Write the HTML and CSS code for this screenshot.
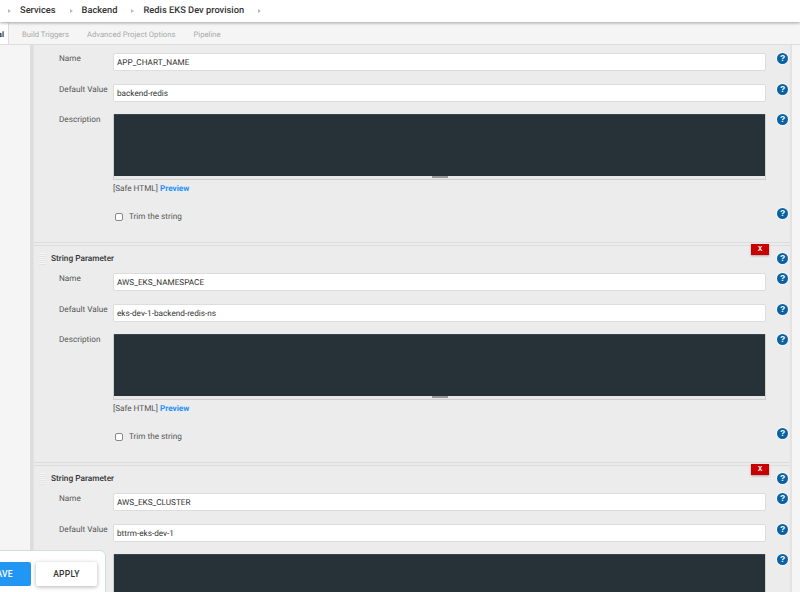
FILE: index.html
```html
<!DOCTYPE html>
<html lang="en">
<head>
<meta charset="utf-8">
<title>Redis EKS Dev provision</title>
<link rel="stylesheet" href="styles.css">
</head>
<body>
<div class="page">
  <header class="crumbs">
    <span class="sep"></span><span class="crumb">Services</span>
    <span class="sep"></span><span class="crumb">Backend</span>
    <span class="sep"></span><span class="crumb">Redis EKS Dev provision</span>
    <span class="sep"></span>
  </header>
  <nav class="tabs">
    <span class="tab active">General</span>
    <span class="tab">Build Triggers</span>
    <span class="tab">Advanced Project Options</span>
    <span class="tab">Pipeline</span>
  </nav>
  <div class="main">
    <aside class="side"></aside>
    <div class="content">
      <section class="param first">
        <div class="row"><label>Name</label><div class="field">APP_CHART_NAME</div><span class="help">?</span></div>
        <div class="row"><label>Default Value</label><div class="field">backend-redis</div><span class="help">?</span></div>
        <div class="row area"><label>Description</label><div class="editor"><div class="dark"></div><div class="grip"><i></i></div></div><span class="help">?</span></div>
        <div class="safe">[Safe HTML] <a>Preview</a></div>
        <div class="row trim"><label></label><div class="check"><span class="box"></span>Trim the string</div><span class="help">?</span></div>
      </section>
      <section class="param">
        <button class="del">X</button>
        <div class="title"><span class="handle"></span><b>String Parameter</b><span class="help">?</span></div>
        <div class="row"><label>Name</label><div class="field">AWS_EKS_NAMESPACE</div><span class="help">?</span></div>
        <div class="row"><label>Default Value</label><div class="field">eks-dev-1-backend-redis-ns</div><span class="help">?</span></div>
        <div class="row area"><label>Description</label><div class="editor"><div class="dark"></div><div class="grip"><i></i></div></div><span class="help">?</span></div>
        <div class="safe">[Safe HTML] <a>Preview</a></div>
        <div class="row trim"><label></label><div class="check"><span class="box"></span>Trim the string</div><span class="help">?</span></div>
      </section>
      <section class="param">
        <button class="del">X</button>
        <div class="title"><span class="handle"></span><b>String Parameter</b><span class="help">?</span></div>
        <div class="row"><label>Name</label><div class="field">AWS_EKS_CLUSTER</div><span class="help">?</span></div>
        <div class="row"><label>Default Value</label><div class="field">bttrm-eks-dev-1</div><span class="help">?</span></div>
        <div class="row area"><label>Description</label><div class="editor"><div class="dark"></div></div><span class="help">?</span></div>
      </section>
    </div>
  </div>
  <div class="actions">
    <button class="btn save">SAVE</button>
    <button class="btn apply">APPLY</button>
  </div>
</div>
</body>
</html>
```
FILE: styles.css
```css
* { box-sizing: border-box; }
html, body { margin: 0; padding: 0; }
body { font-family: Roboto, "Liberation Sans", sans-serif; color: #333; background: #f5f5f5; text-rendering: geometricPrecision; }
.page { position: relative; width: 800px; height: 592px; overflow: hidden; display: flex; flex-direction: column; }

.crumbs { position: relative; z-index: 2; flex: none; height: 22px; background: #fff; box-shadow: 0 1px 3px rgba(0,0,0,.35); display: flex; align-items: center; padding: 0 0 1px 8px; color: #333; }
.crumb { margin: 0 14px 0 9px; font-size: 9.3px; font-weight: 500; }
.sep { width: 0; height: 0; border-left: 3px solid #bbb; border-top: 2.5px solid transparent; border-bottom: 2.5px solid transparent; }

.tabs { flex: none; height: 23px; background: #f5f5f5; border-bottom: 1px solid #ddd; display: flex; font-size: 7.7px; color: #aaa; align-items: stretch; }
.tab { display: flex; align-items: center; padding: 2px 0 0; margin-right: 18px; }
.tab.active { width: 10px; margin-left: -1px; margin-right: 13px; padding-right: 4px; background: #fff; border-right: 1px solid #ddd; border-top-right-radius: 3px; color: #333; font-weight: 700; overflow: hidden; direction: rtl; }

.main { flex: 1; display: flex; min-height: 0; }
.side { flex: none; width: 33px; background: #f5f5f5; border-right: 3px solid #ddd; }
.content { flex: none; width: 759px; background: #ececec; overflow: hidden; border-right: 2px solid #e3e3e3; border-left: 1px solid #e3e3e3; }

.param { position: relative; height: 218px; padding-left: 25px; border-bottom: 1px solid #dcdcdc; }
.param.first { height: 198px; padding-top: 8px; }
.param + .param { margin-top: 2px; border-top: 1px solid #dcdcdc; }
.param:last-child { border-bottom: 0; }

.title { height: 27px; margin-left: -25px; padding: 0 0 2px 5px; display: flex; align-items: center; }
.title b { font-weight: 500; color: #333; margin-left: 5px; font-size: 8.3px; }
.title .help { margin-left: auto; margin-right: 2px; }
.handle { width: 7px; height: 12px; background: repeating-linear-gradient(#f6f6f6 0 1px, #e2e2e2 1px 2px); }

.row { display: grid; grid-template-columns: 54px 653px 24px; height: 30.5px; }
.row label { color: #555; line-height: 12px; font-size: 8.2px; padding-top: .4px; }
.field { height: 18px; background: #fff; border: 1px solid #ddd; border-radius: 2px; padding-left: 3px; line-height: 19px; font-size: 8.2px; color: #333; }
.help { width: 11px; height: 11px; border-radius: 50%; background: #0a62a3; box-shadow: 0 0 0 1px rgba(255,255,255,.6); color: #fff; font-size: 8.5px; font-weight: 700; line-height: 11px; text-align: center; margin-left: 11px; flex: none; font-family: "Liberation Sans", sans-serif; }

.row.area { height: 66px; }
.editor { height: 66px; background: #fff; border: 1px solid #d0d0d0; border-top: 0; }
.dark { height: 62px; background: #263238; border-top: 1px solid #37474f; }
.grip { height: 3px; display: flex; justify-content: center; background: #e8e8e8; }
.grip i { width: 16px; height: 2px; background: #999; }
.safe { margin: 3px 0 0 54px; font-size: 8.2px; line-height: 12px; color: #555; height: 12px; }
.safe a { color: #1e90ff; font-weight: 700; }

.row.trim { margin-top: 16px; height: 20px; }
.row.trim .help { margin-top: -3px; }
.check { display: flex; align-items: flex-start; font-size: 8.2px; color: #555; line-height: 12px; }
.box { width: 8px; height: 8px; background: #fff; border: 1px solid #888; border-radius: 2px; margin: 2px 6px 0 2px; }

.del { position: absolute; top: -2px; right: 21px; z-index: 1; width: 18px; height: 11px; padding: 0; border: 0; background: #c90000; color: #fff; font-family: "Liberation Mono", monospace; font-size: 7px; font-weight: 700; line-height: 11px; text-align: center; box-shadow: 0 1px 2px rgba(0,0,0,.3); }

.actions { position: absolute; left: -40px; top: 550px; width: 146px; height: 50px; background: #fff; border: 1px solid #cfe0da; border-radius: 6px; padding: 11px 0 0 12px; display: flex; gap: 5px; align-items: flex-start; }
.btn { height: 24px; border: 0; border-radius: 2px; font-family: Roboto, sans-serif; font-size: 8.5px; font-weight: 500; letter-spacing: .3px; padding: 0; }
.save { width: 58px; background: #2196f3; color: #fff; }
.apply { width: 61px; background: #fff; color: #333; box-shadow: 0 1px 4px rgba(0,0,0,.3); }
```
